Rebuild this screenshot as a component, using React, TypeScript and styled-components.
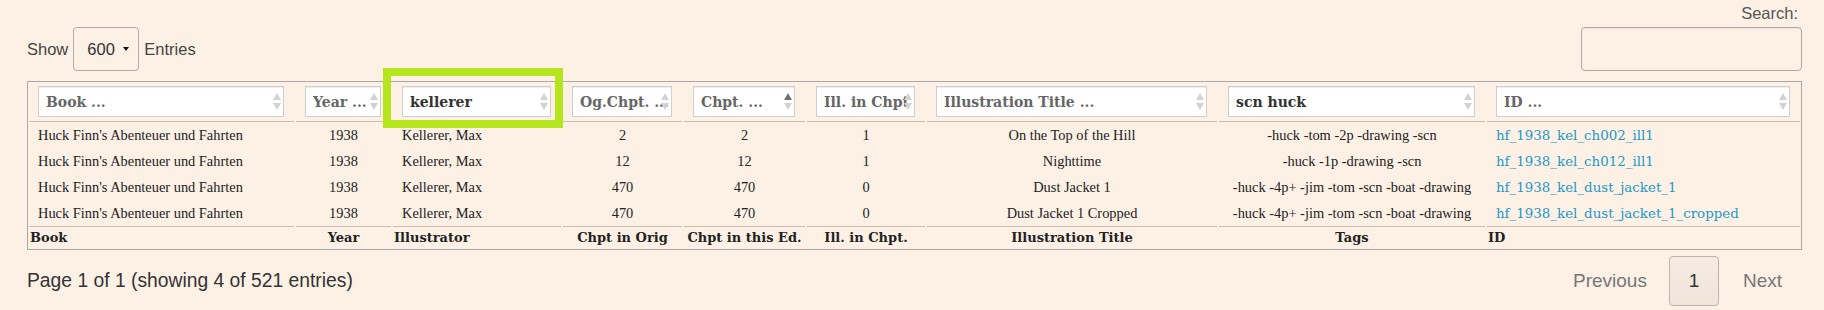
import React from "react";
import styled, { createGlobalStyle } from "styled-components";

const GlobalStyle = createGlobalStyle`
  html, body { margin: 0; padding: 0; background: #fdf1e6; overflow: hidden; }
  body { font-family: "Liberation Sans", Arial, sans-serif; }
  * { box-sizing: border-box; }
`;

type Align = "left" | "center";

const columns: { width: number; placeholder: string; value?: string; active?: boolean; align: Align; foot: string }[] = [
  { width: 267, placeholder: "Book ...", align: "left", foot: "Book" },
  { width: 97, placeholder: "Year ...", align: "center", foot: "Year" },
  { width: 170, placeholder: "Illustrator ...", value: "kellerer", align: "left", foot: "Illustrator" },
  { width: 121, placeholder: "Og.Chpt. ...", align: "center", foot: "Chpt in Orig" },
  { width: 123, placeholder: "Chpt. ...", active: true, align: "center", foot: "Chpt in this Ed." },
  { width: 120, placeholder: "Ill. in Chpt ...", align: "center", foot: "Ill. in Chpt." },
  { width: 292, placeholder: "Illustration Title ...", align: "center", foot: "Illustration Title" },
  { width: 268, placeholder: "Tags ...", value: "scn huck", align: "center", foot: "Tags" },
  { width: 315, placeholder: "ID ...", align: "left", foot: "ID" },
];

const rows: string[][] = [
  ["Huck Finn's Abenteuer und Fahrten", "1938", "Kellerer, Max", "2", "2", "1", "On the Top of the Hill", "-huck -tom -2p -drawing -scn", "hf_1938_kel_ch002_ill1"],
  ["Huck Finn's Abenteuer und Fahrten", "1938", "Kellerer, Max", "12", "12", "1", "Nighttime", "-huck -1p -drawing -scn", "hf_1938_kel_ch012_ill1"],
  ["Huck Finn's Abenteuer und Fahrten", "1938", "Kellerer, Max", "470", "470", "0", "Dust Jacket 1", "-huck -4p+ -jim -tom -scn -boat -drawing", "hf_1938_kel_dust_jacket_1"],
  ["Huck Finn's Abenteuer und Fahrten", "1938", "Kellerer, Max", "470", "470", "0", "Dust Jacket 1 Cropped", "-huck -4p+ -jim -tom -scn -boat -drawing", "hf_1938_kel_dust_jacket_1_cropped"],
];

const Page = styled.div`
  padding: 0 22px 0 27px;
`;

const TopBar = styled.div`
  display: flex;
  justify-content: space-between;
  align-items: flex-end;
  height: 71px;
`;

const LengthControl = styled.div`
  display: flex;
  align-items: center;
  gap: 5px;
  height: 44px;
  font-size: 16.5px;
  color: #444;
`;

const LengthSelect = styled.div`
  display: flex;
  align-items: center;
  width: 66px;
  height: 44px;
  padding-left: 13px;
  border: 1px solid #acacac;
  border-radius: 4px;
  color: #333;
`;

const Caret = styled.span`
  margin-left: 8px;
  width: 0;
  height: 0;
  border-left: 3px solid transparent;
  border-right: 3px solid transparent;
  border-top: 4px solid #111;
`;

const SearchControl = styled.div`
  display: flex;
  flex-direction: column;
  align-items: flex-end;
`;

const SearchLabel = styled.label`
  font-size: 16.5px;
  line-height: 20px;
  color: #555;
  margin-bottom: 4px;
  padding-right: 4px;
`;

const SearchInput = styled.input`
  width: 221px;
  height: 44px;
  border: 1px solid #aaa;
  border-radius: 4px;
  background: transparent;
  box-shadow: inset 0 1px 1px rgba(0, 0, 0, 0.05);
`;

const TableWrap = styled.div`
  position: relative;
  margin-top: 10px;
`;

const Table = styled.table`
  width: 100%;
  table-layout: fixed;
  border-collapse: separate;
  border-spacing: 0;
  border: 1px solid #a8a8aa;
`;

const HeadCell = styled.th`
  position: relative;
  padding: 4px 11px 5px 10px;
  background: linear-gradient(#c9beb4, #c9beb4) center bottom / calc(100% - 2px) 1px no-repeat;
`;

const FilterInput = styled.input`
  display: block;
  width: 100%;
  height: 31px;
  border: 1px solid #cfcfcf;
  border-radius: 0;
  background: #fff;
  padding: 0 2px 0 7px;
  font: bold 14px "DejaVu Serif", Georgia, serif;
  color: #333;
  box-shadow: inset 0 1px 1px rgba(0, 0, 0, 0.075);
  &::placeholder {
    color: #666;
    opacity: 1;
  }
`;

const SortArrows = styled.span`
  position: absolute;
  right: 14px;
  top: 11px;
  display: flex;
  flex-direction: column;
  gap: 3px;
  pointer-events: none;
`;

const Arrow = styled.span<{ $dir: "up" | "down"; $active?: boolean }>`
  width: 0;
  height: 0;
  border-left: 4px solid transparent;
  border-right: 4px solid transparent;
  ${(p) => (p.$dir === "up" ? "border-bottom" : "border-top")}: 7px solid
    ${(p) => (p.$active ? "#707070" : "#d2d2d2")};
`;

const BodyCell = styled.td<{ $align: Align }>`
  padding: 0 10px;
  height: 26px;
  font: 14.4px "Liberation Serif", "Times New Roman", serif;
  line-height: 26px;
  color: #222;
  text-align: ${(p) => p.$align};
  white-space: nowrap;
  overflow: hidden;
`;

const IdLink = styled.a`
  font: 13.4px "DejaVu Serif", Georgia, serif;
  color: #2399c8;
  text-decoration: none;
`;

const FootCell = styled.th<{ $align: Align }>`
  padding: 3px 2px 2px;
  font: bold 13px "DejaVu Serif", Georgia, serif;
  line-height: 18px;
  color: #222;
  text-align: ${(p) => p.$align};
  white-space: nowrap;
  background: linear-gradient(#c9beb4, #c9beb4) center top / calc(100% - 2px) 1px no-repeat;
`;

const Highlight = styled.div`
  position: absolute;
  left: 356px;
  top: -13px;
  width: 180px;
  height: 60px;
  border: 8px solid #b5e61d;
  pointer-events: none;
`;

const BottomBar = styled.div`
  display: flex;
  justify-content: space-between;
  align-items: center;
  margin-top: 6px;
`;

const Info = styled.div`
  font-size: 19.3px;
  color: #333;
`;

const Pagination = styled.nav`
  display: flex;
  align-items: center;
`;

const PageLink = styled.span<{ $side: "prev" | "next" }>`
  font-size: 19px;
  color: #777;
  margin: ${(p) => (p.$side === "prev" ? "0 22px 0 0" : "0 20px 0 24px")};
`;

const PageButton = styled.span`
  display: flex;
  align-items: center;
  justify-content: center;
  width: 50px;
  height: 50px;
  border: 1px solid #bcb4ad;
  border-radius: 4px;
  background: linear-gradient(#f6ebe1, #f1e5da);
  font-size: 19px;
  color: #333;
`;

export default function App() {
  return (
    <>
      <GlobalStyle />
      <Page>
        <TopBar>
          <LengthControl>
            <span>Show</span>
            <LengthSelect>
              600
              <Caret />
            </LengthSelect>
            <span>Entries</span>
          </LengthControl>
          <SearchControl>
            <SearchLabel>Search:</SearchLabel>
            <SearchInput type="search" />
          </SearchControl>
        </TopBar>

        <TableWrap>
          <Table>
            <colgroup>
              {columns.map((c, i) => (
                <col key={i} style={{ width: c.width }} />
              ))}
            </colgroup>
            <thead>
              <tr>
                {columns.map((c, i) => (
                  <HeadCell key={i}>
                    <FilterInput placeholder={c.placeholder} defaultValue={c.value} />
                    <SortArrows>
                      <Arrow $dir="up" $active={c.active} />
                      <Arrow $dir="down" />
                    </SortArrows>
                  </HeadCell>
                ))}
              </tr>
            </thead>
            <tbody>
              {rows.map((r, ri) => (
                <tr key={ri}>
                  {r.map((cell, ci) => (
                    <BodyCell key={ci} $align={columns[ci].align}>
                      {ci === 8 ? <IdLink href="#">{cell}</IdLink> : cell}
                    </BodyCell>
                  ))}
                </tr>
              ))}
            </tbody>
            <tfoot>
              <tr>
                {columns.map((c, i) => (
                  <FootCell key={i} $align={c.align}>
                    {c.foot}
                  </FootCell>
                ))}
              </tr>
            </tfoot>
          </Table>
          <Highlight />
        </TableWrap>

        <BottomBar>
          <Info>Page 1 of 1 (showing 4 of 521 entries)</Info>
          <Pagination>
            <PageLink $side="prev">Previous</PageLink>
            <PageButton>1</PageButton>
            <PageLink $side="next">Next</PageLink>
          </Pagination>
        </BottomBar>
      </Page>
    </>
  );
}
